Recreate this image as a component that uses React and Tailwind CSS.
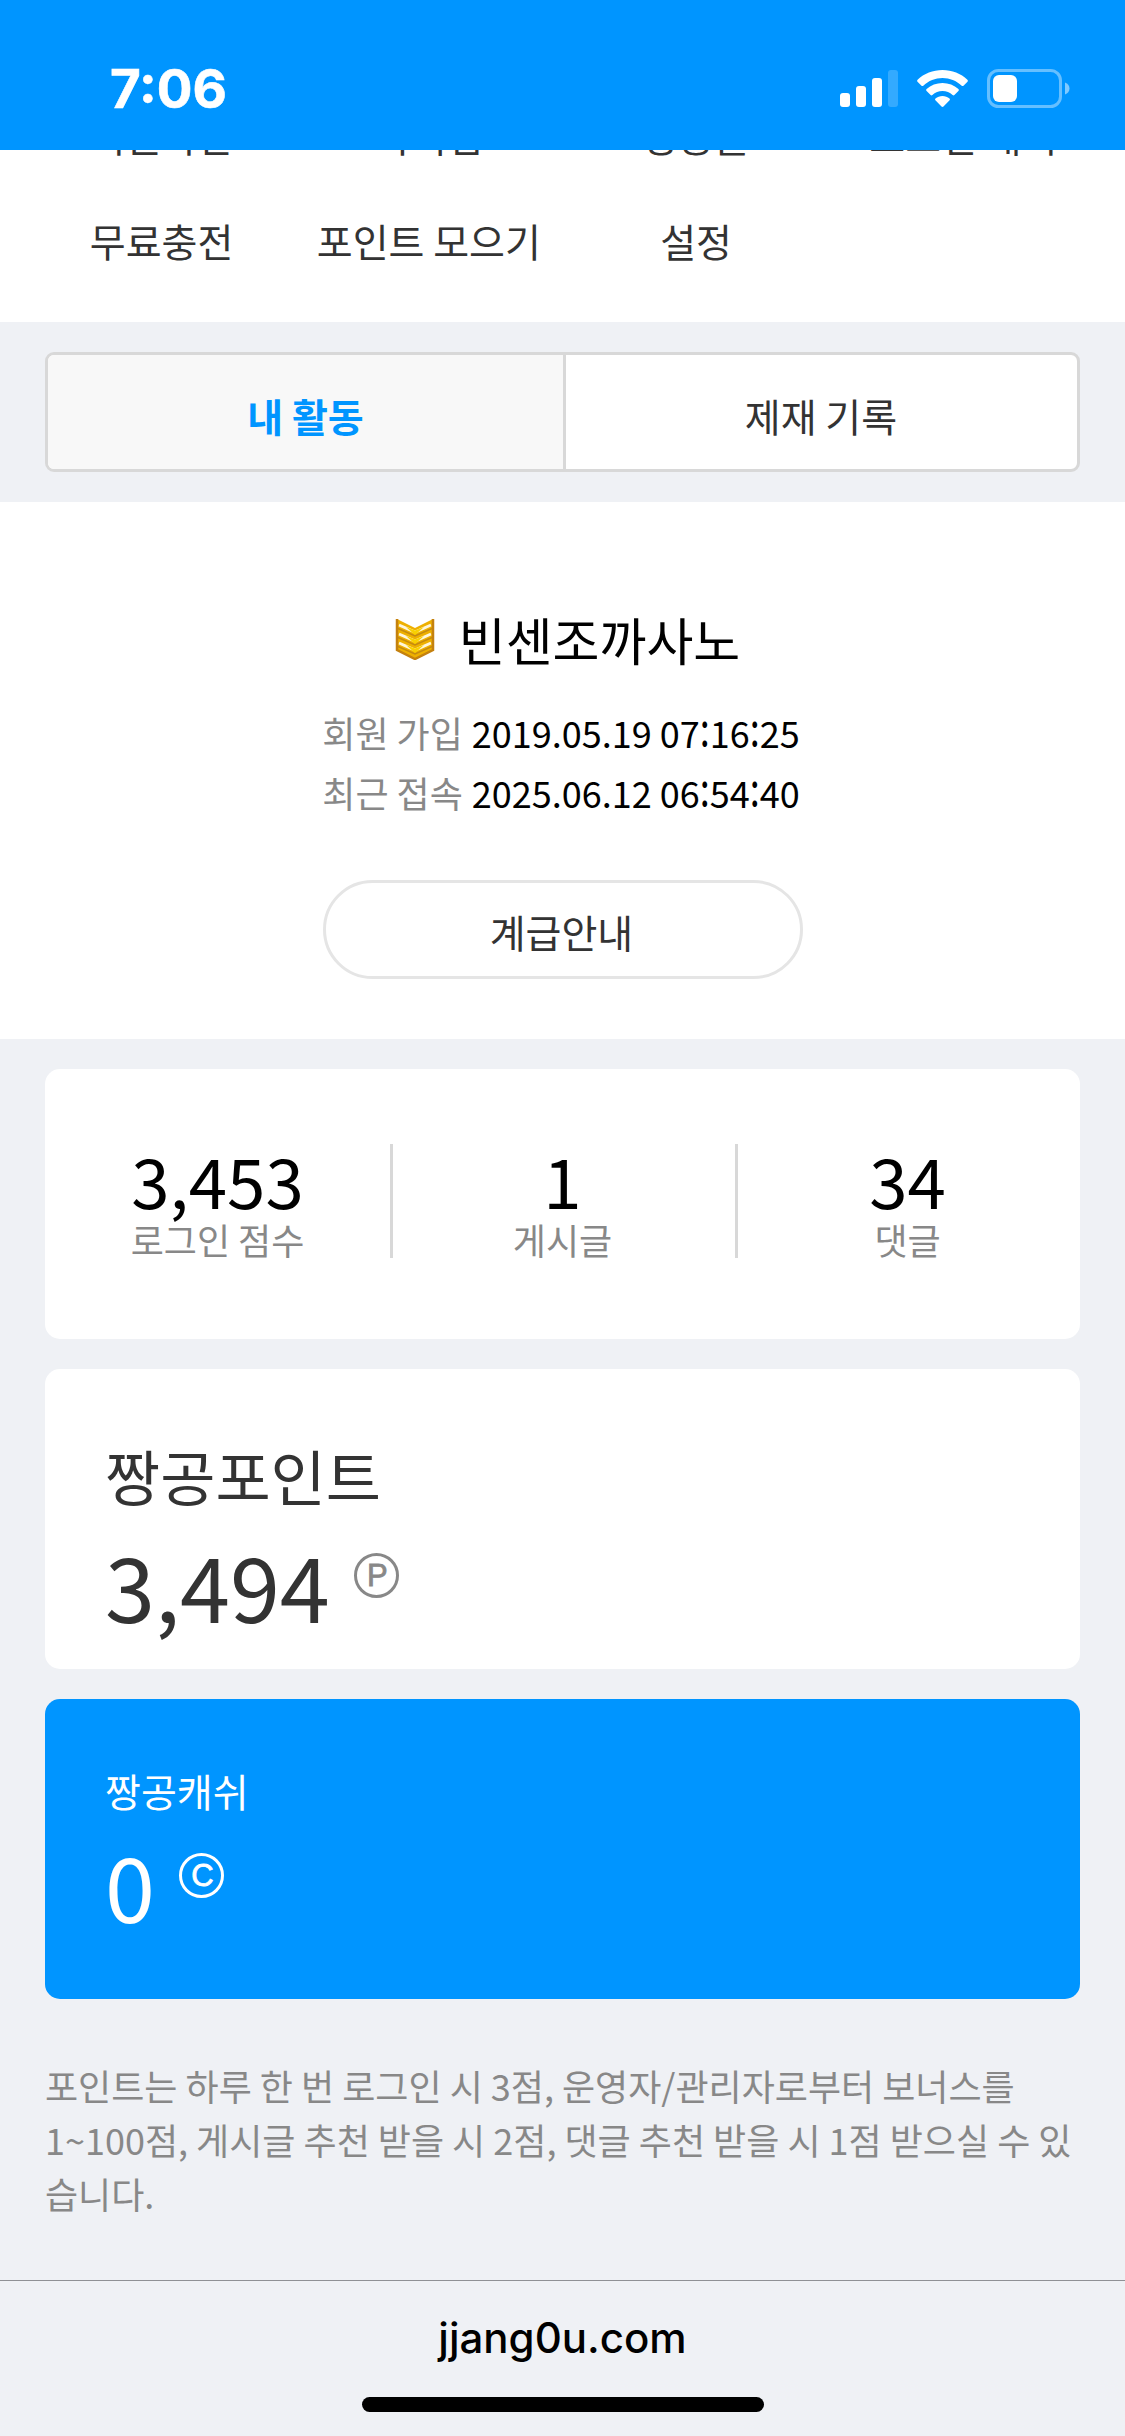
const menuTop = ['회원차단', '아이템', '짱공몰', '로그인 내역'];
const menuBottom = ['무료충전', '포인트 모으기', '설정', ''];

const stats = [
  { label: '로그인 점수', value: '3,453' },
  { label: '게시글', value: '1' },
  { label: '댓글', value: '34' },
];

const StatusBar = () => (
  <header className="flex h-[150px] shrink-0 items-start justify-between bg-[#0095ff] pl-[110px] pr-[55px] text-white">
    <div className="mt-[58px] font-['Inter'] text-[53px] font-bold leading-[63px] [-webkit-text-stroke:0.6px]">7:06</div>
    <div className="mt-[68px] flex items-start">
      <svg className="mt-[2px]" width="58" height="38" viewBox="0 0 58 38" fill="currentColor">
        <rect x="0" y="23" width="10" height="14" rx="3" />
        <rect x="16" y="16" width="10" height="21" rx="3" />
        <rect x="32" y="8" width="10" height="29" rx="3" />
        <rect x="48" y="0" width="10" height="37" rx="3" opacity="0.2" />
      </svg>
      <svg className="ml-[19px] mt-[2px]" width="51" height="38" viewBox="0 0 51 38" fill="currentColor">
        <path d="M25.5 0C35 0 44 3.6 50.4 9.7c.6.6.6 1.4.1 2l-4 4c-.5.5-1.2.5-1.8 0C39.5 10.8 32.7 8 25.5 8S11.5 10.8 6.3 15.7c-.6.5-1.3.5-1.8 0l-4-4c-.5-.6-.5-1.4.1-2C7 3.6 16 0 25.5 0Z" />
        <path d="M25.5 13c6 0 11.6 2.2 15.9 6.1.6.5.6 1.3 0 1.9l-4 4c-.5.5-1.2.5-1.8 0-2.7-2.4-6.3-3.9-10.1-3.9s-7.4 1.5-10.1 3.9c-.6.5-1.3.5-1.8 0l-4-4c-.6-.6-.6-1.4 0-1.9C13.9 15.2 19.5 13 25.5 13Z" />
        <path d="M25.5 26c2.7 0 5.1.9 7 2.5.6.5.6 1.2.1 1.8l-6.1 6.2c-.6.6-1.4.6-2 0l-6.1-6.2c-.5-.6-.5-1.3.1-1.8 1.9-1.6 4.3-2.5 7-2.5Z" />
      </svg>
      <svg className="ml-[19px]" width="83" height="40" viewBox="0 0 83 40" fill="currentColor">
        <rect x="1.5" y="2.5" width="72" height="36" rx="10" fill="none" stroke="currentColor" strokeWidth="3" opacity="0.4" />
        <rect x="6" y="7" width="24" height="27" rx="6" />
        <path d="M78 14.5c2.7 1 4.5 3.3 4.5 6s-1.8 5-4.5 6Z" opacity="0.5" />
      </svg>
    </div>
  </header>
);

const MenuRow = ({ items }) => (
  <ul className="grid h-[105px] shrink-0 grid-cols-4 px-[28px]">
    {items.map((item, i) => (
      <li key={i} className="whitespace-nowrap text-center text-[39px] leading-[60px] text-[#333]">
        {item}
      </li>
    ))}
  </ul>
);

const RankIcon = () => (
  <svg width="40" height="42" viewBox="0 0 40 42">
    <path d="M2 1 20 10 38 1V32L20 41 2 32Z" fill="#eeb000" />
    <g fill="none" stroke="#fff6dc" strokeWidth="3">
      <path d="M4 7 20 14 36 7" />
      <path d="M4 16 20 23 36 16" />
      <path d="M4 25 20 32 36 25" />
    </g>
    <g fill="none" stroke="#c48a10" strokeWidth="1.5">
      <path d="M3 10.5 20 18 37 10.5" />
      <path d="M3 19.5 20 27 37 19.5" />
      <path d="M3 28.5 20 36 37 28.5" />
    </g>
    <g fill="#f8d000">
      <path d="M11 9 20 12.5 29 9 20 17Z" />
      <path d="M11 18 20 21.5 29 18 20 26Z" />
      <path d="M11 27 20 30.5 29 27 20 35Z" />
    </g>
    <path d="M2 1V32L20 41 38 32V1" fill="none" stroke="#c4810f" strokeWidth="2.5" />
  </svg>
);

const CoinBadge = ({ letter, className }) => (
  <span className={`flex h-[45px] w-[45px] items-center justify-center rounded-full border-[3px] pl-[2px] font-['Liberation_Sans'] text-[31px] leading-none [-webkit-text-stroke:0.8px] ${className}`}>
    {letter}
  </span>
);

// Colons between digits are tall and sit centred on the figure height
const DateTime = ({ value }) => (
  <dd>
    {value.split(':').map((part, i) => (
      <span key={i}>
        {i > 0 && <span className="relative -top-[7px] inline-block scale-y-[1.3]">:</span>}
        {part}
      </span>
    ))}
  </dd>
);

const App = () => {
  return (
    <div className="flex h-[2436px] w-[1125px] flex-col overflow-hidden bg-[#eff1f5] font-['Noto_Sans_CJK_KR','Noto_Sans',sans-serif]">
      <StatusBar />

      {/* Menu, scrolled under the status bar */}
      <nav className="flex h-[172px] shrink-0 flex-col justify-end overflow-hidden bg-white pb-[7px]">
        <MenuRow items={menuTop} />
        <MenuRow items={menuBottom} />
      </nav>

      {/* Tabs */}
      <div className="shrink-0 px-[45px] py-[30px]">
        <div className="flex h-[120px] overflow-hidden rounded-[9px] border-[3px] border-[#d8d8d8] bg-white text-center text-[39px] leading-[121px]">
          <button className="w-[518px] border-r-[3px] border-[#d8d8d8] bg-[#f8f8f8] font-bold text-[#0095ff]">내 활동</button>
          <button className="flex-1 pr-px text-[#333]">제재 기록</button>
        </div>
      </div>

      {/* Profile */}
      <section className="flex h-[537px] shrink-0 flex-col items-center bg-white pt-[95px]">
        <div className="flex items-center pl-[10px]">
          <RankIcon />
          <h1 className="ml-[24px] text-[51px] leading-[84px]">빈센조까사노</h1>
        </div>
        <dl className="mt-[21px] pr-[3px] text-[36px] leading-[60px]">
          <div className="flex gap-[9px]">
            <dt className="text-[#888]">회원 가입</dt>
            <DateTime value="2019.05.19 07:16:25" />
          </div>
          <div className="flex gap-[9px]">
            <dt className="text-[#888]">최근 접속</dt>
            <DateTime value="2025.06.12 06:54:40" />
          </div>
        </dl>
        <button className="mt-[58px] h-[99px] w-[480px] rounded-full border-[3px] border-[#e5e5e5] pr-[2px] text-[39px] leading-[96px] text-[#333]">
          계급안내
        </button>
      </section>

      <main className="flex flex-1 flex-col gap-[30px] px-[45px] pt-[30px]">
        <section className="grid h-[270px] shrink-0 grid-cols-3 rounded-[15px] bg-white pt-[75px] text-center">
          {stats.map((stat, i) => (
            <div key={stat.label} className={`h-[114px] ${i > 0 ? 'border-l-[3px] border-[#d8d8d8] pr-[3px]' : ''}`}>
              <div className="pb-[3px] text-[69px] leading-[71px]">{stat.value}</div>
              <div className="text-[36px] leading-[42px] text-[#888]">{stat.label}</div>
            </div>
          ))}
        </section>

        <section className="h-[300px] shrink-0 rounded-[15px] bg-white px-[60px] pt-[64px] text-[#333]">
          <h2 className="text-[60px] leading-[84px]">짱공포인트</h2>
          <div className="flex items-start">
            <span className="text-[90px] leading-[134px]">3,494</span>
            <CoinBadge letter="P" className="ml-[24px] mt-[36px] border-[#888] text-[#888]" />
          </div>
        </section>

        <section className="h-[300px] shrink-0 rounded-[15px] bg-[#0095ff] px-[60px] pt-[58px] text-white">
          <h2 className="text-[39px] leading-[66px]">짱공캐쉬</h2>
          <div className="flex items-start">
            <span className="text-[90px] leading-[123px]">0</span>
            <CoinBadge letter="C" className="ml-[24px] mt-[30px] border-white text-white" />
          </div>
        </section>

        <p className="mt-[29px] break-all text-[36px] leading-[54px] text-[#888]">
          포인트는 하루 한 번 로그인 시 3점, 운영자/관리자로부터 보너스를
          <br />
          1~100점, 게시글 추천 받을 시 2점, 댓글 추천 받을 시 1점 받으실 수 있습니다.
        </p>
      </main>

      {/* Browser bar */}
      <footer className="flex h-[156px] shrink-0 flex-col items-center border-t border-[#8f9095]">
        <div className="mt-[31px] font-['Inter'] text-[42px] font-medium leading-[52px] text-black">jjang0u.com</div>
        <div className="mt-[33px] h-[15px] w-[402px] rounded-full bg-black" />
      </footer>
    </div>
  );
};

export default App;
